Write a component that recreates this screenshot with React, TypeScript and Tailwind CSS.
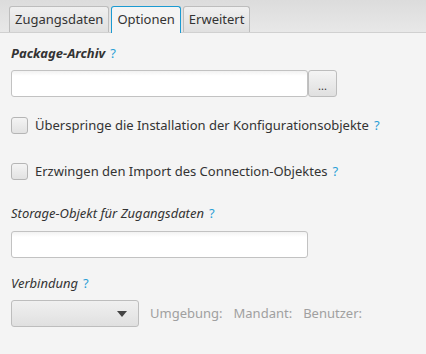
import React from "react";

const Help = () => <span className="text-[#2a9fd6] ml-[5px] not-italic font-normal">?</span>;

const Check = ({ label }: { label: string }) => (
  <div className="flex items-center h-[17px]">
    <div className="w-[17px] h-[17px] rounded-[3px] border border-[#b5b5b5] bg-gradient-to-b from-[#f4f4f4] to-[#e2e2e2]" />
    <span className="ml-[7px] text-[#333]">{label}</span>
    <Help />
  </div>
);

const Input = () => (
  <div className="w-[297px] h-[27px] rounded-[3px] border border-[#c2c2c2] bg-gradient-to-b from-[#f2f2f2] to-white to-[20%]" />
);

export default function App() {
  return (
    <div className="w-[426px] h-[354px] bg-[#f4f4f4] text-[13px] text-[#333]" style={{ fontFamily: '"Noto Sans", sans-serif' }}>
      <div className="h-[33px] bg-gradient-to-b from-[#dcdcdc] to-[#e8e8e8] border-b border-[#d0d0d0] flex items-end pl-[9px] gap-[2px]">
        <div className="h-[26px] px-[5px] flex items-center rounded-t-[3px] border border-b-0 border-[#bdbdbd] bg-gradient-to-b from-[#f0f0f0] to-[#e0e0e0]">Zugangsdaten</div>
        <div className="h-[27px] px-[5px] flex items-center rounded-t-[3px] border border-b-0 border-[#1b9ad1] bg-[#f4f4f4] mb-[-1px]">Optionen</div>
        <div className="h-[26px] px-[5px] flex items-center rounded-t-[3px] border border-b-0 border-[#bdbdbd] bg-gradient-to-b from-[#f0f0f0] to-[#e0e0e0]">Erweitert</div>
      </div>
      <div className="pl-[11px] pt-[11px]">
        <div className="font-bold italic leading-[18px]">Package-Archiv<Help /></div>
        <div className="flex mt-[8px]">
          <Input />
          <div className="w-[29px] h-[27px] rounded-[3px] border border-[#bdbdbd] bg-gradient-to-b from-[#f4f4f4] to-[#e0e0e0] flex items-center justify-center text-[11px] leading-none pt-[4px]">...</div>
        </div>
        <div className="mt-[20px]"><Check label="Überspringe die Installation der Konfigurationsobjekte" /></div>
        <div className="mt-[29px]"><Check label="Erzwingen den Import des Connection-Objektes" /></div>
        <div className="italic leading-[18px] mt-[24px]">Storage-Objekt für Zugangsdaten<Help /></div>
        <div className="mt-[9px]"><Input /></div>
        <div className="italic leading-[18px] mt-[16px]">Verbindung<Help /></div>
        <div className="flex items-center mt-[8px]">
          <div className="w-[128px] h-[27px] rounded-[3px] border border-[#bdbdbd] bg-gradient-to-b from-[#f0f0f0] to-[#e0e0e0] flex items-center justify-end pr-[11px]">
            <div className="w-0 h-0 border-l-[5px] border-r-[5px] border-t-[6px] border-l-transparent border-r-transparent border-t-[#444]" />
          </div>
          <span className="text-[#a0a0a0] ml-[11px]">Umgebung:</span>
          <span className="text-[#a0a0a0] ml-[11px]">Mandant:</span>
          <span className="text-[#a0a0a0] ml-[11px]">Benutzer:</span>
        </div>
      </div>
    </div>
  );
}
